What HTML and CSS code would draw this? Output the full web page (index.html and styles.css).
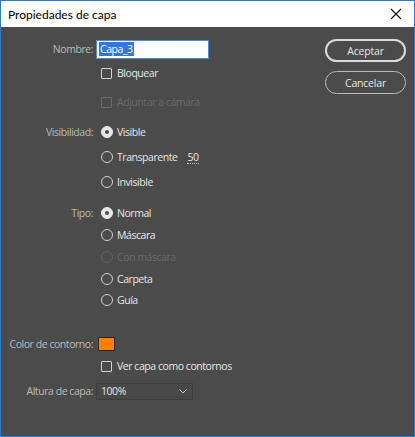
FILE: index.html
```html
<!DOCTYPE html>
<html lang="es">
<head>
<meta charset="utf-8">
<title>Propiedades de capa</title>
<link rel="stylesheet" href="styles.css">
</head>
<body>
<div class="window">
  <div class="titlebar">
    <span class="title">Propiedades de capa</span>
    <svg class="close" width="12" height="12" viewBox="0 0 12 12"><path d="M1 1 L11 11 M11 1 L1 11" stroke="#111" stroke-width="1.1" fill="none"/></svg>
  </div>
  <div class="body">
    <div class="form">
      <div class="row r-first">
        <span class="label">Nombre:</span>
        <div class="input"><span class="sel">Capa_3</span></div>
      </div>
      <div class="row g4">
        <span class="label"></span>
        <span class="check"></span><span class="opt">Bloquear</span>
      </div>
      <div class="row g9">
        <span class="label"></span>
        <span class="check dis"></span><span class="opt dis">Adjuntar a cámara</span>
      </div>
      <div class="row g10">
        <span class="label">Visibilidad:</span>
        <span class="radio on"></span><span class="opt">Visible</span>
      </div>
      <div class="row g5">
        <span class="label"></span>
        <span class="radio"></span><span class="opt">Transparente</span><span class="hot">50</span>
      </div>
      <div class="row g5">
        <span class="label"></span>
        <span class="radio"></span><span class="opt">Invisible</span>
      </div>
      <div class="row g11">
        <span class="label">Tipo:</span>
        <span class="radio on"></span><span class="opt">Normal</span>
      </div>
      <div class="row g2">
        <span class="label"></span>
        <span class="radio"></span><span class="opt">Máscara</span>
      </div>
      <div class="row g2">
        <span class="label"></span>
        <span class="radio dis"></span><span class="opt dis">Con máscara</span>
      </div>
      <div class="row g2">
        <span class="label"></span>
        <span class="radio"></span><span class="opt">Carpeta</span>
      </div>
      <div class="row g1">
        <span class="label"></span>
        <span class="radio"></span><span class="opt">Guía</span>
      </div>
      <div class="row g24">
        <span class="label">Color de contorno:</span>
        <span class="swatch"></span>
      </div>
      <div class="row g2">
        <span class="label"></span>
        <span class="check"></span><span class="opt">Ver capa como contornos</span>
      </div>
      <div class="row g5">
        <span class="label">Altura de capa:</span>
        <div class="select"><span>100%</span>
          <svg width="8" height="5" viewBox="0 0 8 5"><path d="M0.5 0.5 L4 4 L7.5 0.5" stroke="#c8c8c8" stroke-width="1" fill="none"/></svg>
        </div>
      </div>
    </div>
    <div class="buttons">
      <button class="btn primary">Aceptar</button>
      <button class="btn">Cancelar</button>
    </div>
  </div>
</div>
</body>
</html>
```
FILE: styles.css
```css
* { box-sizing: border-box; }
html, body { margin: 0; padding: 0; }
body { width: 415px; height: 437px; overflow: hidden; font-family: "Open Sans", "Noto Sans", sans-serif; }
.window {
  width: 415px; height: 437px;
  border: 1px solid #2b7bd0;
  display: flex; flex-direction: column;
  background: #4b4b4b;
}
.titlebar {
  height: 26px; background: #fff;
  display: flex; align-items: center; justify-content: space-between;
  padding: 0 12px 0 7px;
}
.title { font-family: Lato, "Open Sans", sans-serif; font-size: 12px; color: #000; }
.close { display: block; }
.body { flex: 1; display: flex; justify-content: space-between; padding: 0 8px 0 0; }
.form { display: flex; flex-direction: column; padding-top: 12px; }
.row { display: flex; align-items: center; height: 20px; font-size: 10.5px; letter-spacing: -0.45px; }
.g1 { margin-top: 1px; } .g2 { margin-top: 2px; } .g4 { margin-top: 4px; }
.g5 { margin-top: 5px; } .g9 { margin-top: 9px; } .g10 { margin-top: 10px; }
.g11 { margin-top: 11px; } .g24 { margin-top: 24px; }
.label { width: 94px; text-align: right; color: #bababa; padding-right: 2px; flex: none; white-space: nowrap; }
.input {
  margin-left: 1px; width: 113px; height: 19px; background: #fff;
  border: 1px solid #4b8fe0; padding: 1px 2px; display: flex; align-items: center;
}
.sel { background: #3377d8; color: #fff; line-height: 14px; padding: 0 1px; }
.check {
  width: 11px; height: 11px; border: 1px solid #cfcfcf; border-radius: 1px;
  margin-left: 6px; margin-right: 5px; flex: none;
}
.check.dis { border-color: #6a6a6a; }
.radio {
  width: 12px; height: 12px; border: 1px solid #cfcfcf; border-radius: 50%;
  margin-left: 6px; margin-right: 4px; flex: none; position: relative;
}
.radio.on { background: #e8e8e8; border-color: #e8e8e8; }
.radio.on::after {
  content: ""; position: absolute; left: 3px; top: 3px; width: 4px; height: 4px;
  border-radius: 50%; background: #4b4b4b;
}
.radio.dis { border-color: #626262; }
.opt { color: #e6e6e6; white-space: nowrap; }
.opt.dis { color: #6a6a6a; }
.hot { color: #e6e6e6; margin-left: 10px; border-bottom: 1px dotted #bdbdbd; line-height: 12px; }
.swatch {
  width: 17px; height: 14px; background: #ff7f00; border: 1px solid #2a2a2a;
  margin-left: 3px;
}
.select {
  margin-left: 1px; width: 97px; height: 17px; background: #484848;
  border: 1px solid #3e3e3e; display: flex; align-items: center; justify-content: space-between;
  padding: 0 5px 0 4px; color: #e6e6e6;
}
.select svg { display: block; }
.buttons { display: flex; flex-direction: column; gap: 9px; padding-top: 12px; }
.btn {
  width: 81px; height: 23px; border-radius: 12px; background: transparent;
  border: 1px solid #b9b9b9; color: #e6e6e6; font-family: "Open Sans", "Noto Sans", sans-serif;
  font-size: 10.5px; letter-spacing: -0.2px; padding: 0; cursor: default;
}
.btn.primary { border: 2px solid #dadada; }
```
